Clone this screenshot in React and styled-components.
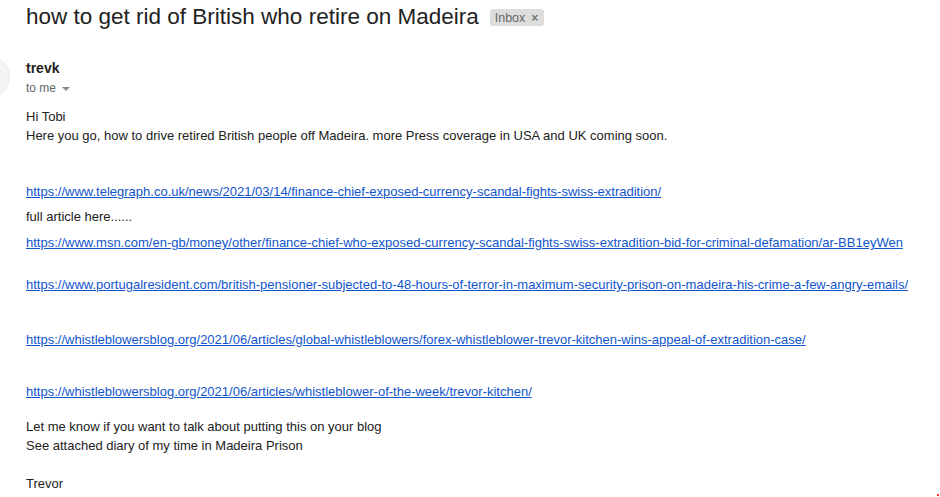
import React from "react";
import styled, { createGlobalStyle } from "styled-components";

const GlobalStyle = createGlobalStyle`
  html, body {
    margin: 0;
    padding: 0;
    background: #fff;
  }
  body {
    font-family: Arial, "Liberation Sans", sans-serif;
    color: #222;
    width: 940px;
    height: 497px;
    overflow: hidden;
  }
`;

const Page = styled.div`
  position: relative;
  width: 940px;
  height: 497px;
  overflow: hidden;
`;

const SubjectRow = styled.div`
  display: flex;
  align-items: center;
  gap: 11px;
  height: 34px;
  padding-left: 26px;
`;

const Subject = styled.h2`
  margin: 0;
  font-family: Arial, "Liberation Sans", sans-serif;
  font-weight: 400;
  font-size: 22.5px;
  color: #222;
`;

const Chip = styled.span`
  display: inline-flex;
  align-items: center;
  gap: 6px;
  height: 17px;
  padding: 0 6px 0 5px;
  margin-top: 1px;
  border-radius: 3px;
  background: #ddd;
  color: #666;
  font-size: 12.5px;
`;

const ChipClose = styled.span`
  font-size: 12px;
  font-weight: 700;
  color: #777;
`;

const Sender = styled.div`
  position: relative;
  display: flex;
  flex-direction: column;
  padding: 24px 0 0 26px;
  height: 72px;
  box-sizing: border-box;
`;

const Avatar = styled.div`
  position: absolute;
  left: -30px;
  top: 23px;
  width: 40px;
  height: 40px;
  border-radius: 50%;
  background: #f5f5f5;
  box-shadow: inset 0 0 0 1px #ececec;
`;

const Name = styled.div`
  font-size: 14px;
  font-weight: 700;
  line-height: 20px;
  color: #222;
`;

const ToMe = styled.div`
  display: flex;
  align-items: center;
  gap: 6px;
  font-size: 12px;
  line-height: 20px;
  color: #666;
`;

const Caret = styled.span`
  width: 0;
  height: 0;
  margin-top: 1px;
  border-left: 4px solid transparent;
  border-right: 4px solid transparent;
  border-top: 4px solid #888;
`;

const Body = styled.div`
  padding-left: 26px;
  font-size: 13px;
  line-height: 19px;
  padding-top: 1px;
`;

const Line = styled.div`
  margin-top: ${(p) => p.$gap || 0}px;
  white-space: nowrap;
  color: #222;
`;

const Link = styled.a`
  color: #1155cc;
  text-decoration: underline;
`;

const Dot = styled.span`
  position: absolute;
  right: 1px;
  bottom: 1px;
  width: 2px;
  height: 2px;
  background: #f33;
`;

const lines = [
  { text: "Hi Tobi", gap: 0 },
  {
    text: "Here you go, how to drive retired British people off Madeira. more Press coverage in USA and UK coming soon.",
    gap: 0,
  },
  {
    href: "https://www.telegraph.co.uk/news/2021/03/14/finance-chief-exposed-currency-scandal-fights-swiss-extradition/",
    gap: 37,
  },
  { text: "full article here......", gap: 6 },
  {
    href: "https://www.msn.com/en-gb/money/other/finance-chief-who-exposed-currency-scandal-fights-swiss-extradition-bid-for-criminal-defamation/ar-BB1eyWen",
    gap: 7,
  },
  {
    href: "https://www.portugalresident.com/british-pensioner-subjected-to-48-hours-of-terror-in-maximum-security-prison-on-madeira-his-crime-a-few-angry-emails/",
    gap: 23,
  },
  {
    href: "https://whistleblowersblog.org/2021/06/articles/global-whistleblowers/forex-whistleblower-trevor-kitchen-wins-appeal-of-extradition-case/",
    gap: 36,
  },
  {
    href: "https://whistleblowersblog.org/2021/06/articles/whistleblower-of-the-week/trevor-kitchen/",
    gap: 33,
  },
  { text: "Let me know if you want to talk about putting this on your blog", gap: 16 },
  { text: "See attached diary of my time in Madeira Prison", gap: 0 },
  { text: "Trevor", gap: 19 },
];

export default function App() {
  return (
    <Page>
      <GlobalStyle />
      <SubjectRow>
        <Subject>how to get rid of British who retire on Madeira</Subject>
        <Chip>
          Inbox <ChipClose>×</ChipClose>
        </Chip>
      </SubjectRow>
      <Sender>
        <Avatar />
        <Name>trevk</Name>
        <ToMe>
          to me <Caret />
        </ToMe>
      </Sender>
      <Body>
        {lines.map((l, i) => (
          <Line key={i} $gap={l.gap}>
            {l.href ? <Link href={l.href}>{l.href}</Link> : l.text}
          </Line>
        ))}
      </Body>
      <Dot />
    </Page>
  );
}
